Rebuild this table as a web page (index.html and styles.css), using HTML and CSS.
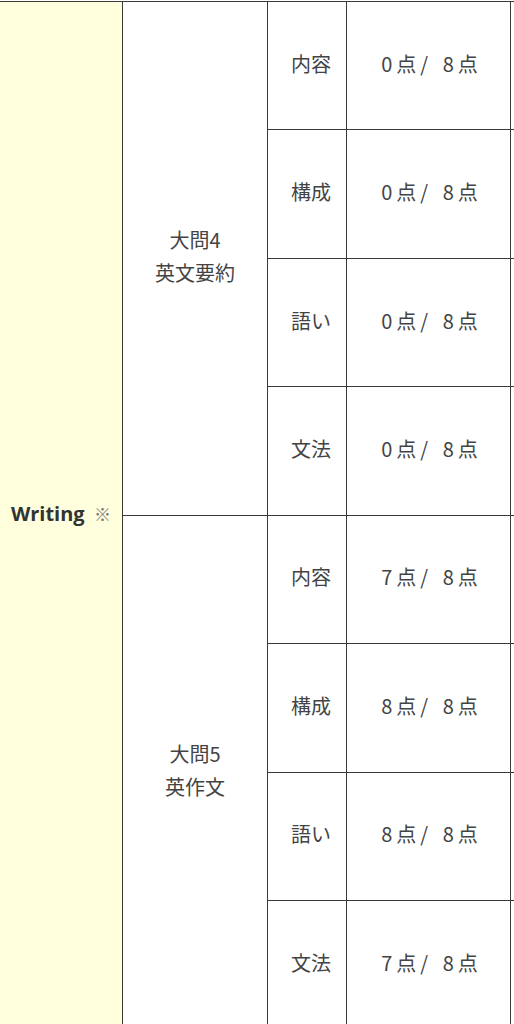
FILE: index.html
```html
<!DOCTYPE html>
<html lang="ja">
<head>
<meta charset="utf-8">
<title>Writing</title>
<link rel="stylesheet" href="styles.css">
</head>
<body>
<div class="frame">
<table class="score">
<colgroup>
<col class="c-sec"><col class="c-q"><col class="c-item"><col class="c-pt"><col class="c-extra">
</colgroup>
<tbody>
<tr>
<th class="sec" rowspan="8"><span class="sec-name">Writing</span> <span class="mark">※</span></th>
<td class="q" rowspan="4">大問4<br>英文要約</td>
<td class="item">内容</td><td class="pt">0点/ 8点</td><td class="extra"></td>
</tr>
<tr><td class="item">構成</td><td class="pt">0点/ 8点</td><td class="extra"></td></tr>
<tr><td class="item">語い</td><td class="pt">0点/ 8点</td><td class="extra"></td></tr>
<tr><td class="item">文法</td><td class="pt">0点/ 8点</td><td class="extra"></td></tr>
<tr>
<td class="q" rowspan="4">大問5<br>英作文</td>
<td class="item">内容</td><td class="pt">7点/ 8点</td><td class="extra"></td>
</tr>
<tr><td class="item">構成</td><td class="pt">8点/ 8点</td><td class="extra"></td></tr>
<tr><td class="item">語い</td><td class="pt">8点/ 8点</td><td class="extra"></td></tr>
<tr><td class="item">文法</td><td class="pt">7点/ 8点</td><td class="extra"></td></tr>
</tbody>
</table>
</div>
</body>
</html>
```
FILE: styles.css
```css
html, body {
  margin: 0;
  padding: 0;
  background: #fff;
}
.frame {
  width: 514px;
  height: 1024px;
  overflow: hidden;
}
.score {
  border-collapse: collapse;
  table-layout: fixed;
  width: 611px;
  margin-top: 1px;
  margin-left: -1px;
  font-family: "Noto Sans CJK JP", "Noto Sans", sans-serif;
  font-size: 20px;
  color: #444;
}
.c-sec { width: 123px; }
.c-q { width: 145px; }
.c-item { width: 79px; }
.c-pt { width: 164px; }
.c-extra { width: 100px; }
.score th, .score td {
  border: 1px solid #3a3a3a;
  padding: 0 0 5px 0;
  text-align: center;
  vertical-align: middle;
  font-weight: normal;
}
.score tr { height: 128.43px; }
.sec {
  background: #ffffdd;
}
.sec-name {
  font-family: "Open Sans", "Noto Sans", sans-serif;
  font-weight: 700;
  color: #333;
}
.mark {
  display: inline-block;
  margin-left: 5px;
  font-size: 17px;
  color: #777;
}
.q {
  line-height: 33px;
}
.score .item {
  padding-left: 8px;
}
.score .pt {
  letter-spacing: 4px;
  word-spacing: 2px;
  padding-left: 6px;
}
```
